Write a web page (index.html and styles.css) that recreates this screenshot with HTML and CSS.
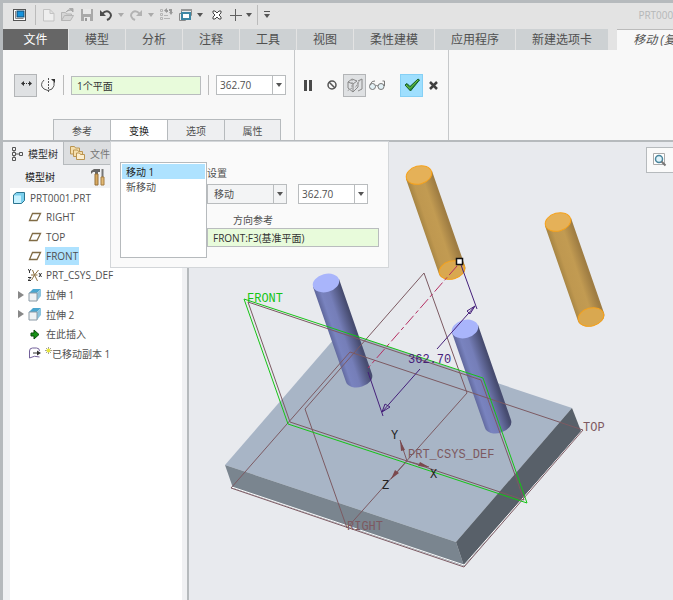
FILE: index.html
```html
<!DOCTYPE html>
<html lang="zh-CN">
<head>
    <meta charset="UTF-8">
    <meta name="viewport" content="width=device-width, initial-scale=1.0">
    <title>PRT0001</title>
    <link rel="stylesheet" href="styles.css">
</head>
<body>
    <header class="title-bar">
        <button class="tool" aria-label="窗口"><svg width="16" height="16" viewBox="0 0 16 16"><rect x="2.500" y="2.500" width="12" height="11" fill="#fff" stroke="#555"/><path d="M4.500 4v7.500h8" fill="none" stroke="#888"/><rect x="6" y="4" width="7" height="6" fill="#1593dd" stroke="#134a70"/></svg></button>
        <span class="divider"></span>
        <button class="tool" aria-label="新建"><svg width="16" height="16" viewBox="0 0 16 16"><path d="M2.500 2.500h6.500l4 4v7.500h-10.500zM9 2.500v4h4" fill="#eee" stroke="#c3c3c3"/></svg></button>
        <button class="tool" aria-label="打开"><svg width="16" height="16" viewBox="0 0 16 16"><path d="M1.500 13.500v-8h4l1 1.500h5v2M1.500 13.500l3-5h9l-3 5z" fill="#d5d5d5" stroke="#b5b5b5"/><path d="M6 5q2-3 5-2M9.500 1.500h3.500v3.500z" fill="#aaa" stroke="#aaa"/></svg></button>
        <button class="tool" aria-label="保存"><svg width="16" height="16" viewBox="0 0 16 16"><path d="M2 2h12v12h-12z" fill="#a9a9a9"/><path d="M4 2h8v5h-8zM5 10h6v4h-6z" fill="#e8e8e8"/><path d="M6 11h2v3h-2z" fill="#999"/></svg></button>
        <button class="tool" aria-label="撤消"><svg width="16" height="16" viewBox="0 0 16 16"><path d="M4 7q4-4 7-2 4 3 0 7l-2 1" fill="none" stroke="#4b4b4b" stroke-width="2"/><path d="M2 3v6h6z" fill="#4b4b4b"/></svg></button>
        <button class="caret pale" aria-label="撤消列表"></button>
        <button class="tool" aria-label="重做"><svg width="16" height="16" viewBox="0 0 16 16"><path d="M12 7q-4-4-7-2-4 3 0 7l2 1" fill="none" stroke="#b3b3b3" stroke-width="2"/><path d="M14 3v6h-6z" fill="#b3b3b3"/></svg></button>
        <button class="caret pale" aria-label="重做列表"></button>
        <button class="tool" aria-label="重新生成"><svg width="16" height="16" viewBox="0 0 16 16"><path d="M2.500 2.500h2v2h-2zM2.500 6.500h2v2h-2zM2.500 10.500h2v2h-2zM6 8.500h4M6 11.500h6" fill="none" stroke="#b5b5b5"/><path d="M8 4h2M13 5v-2h-2" fill="none" stroke="#999" stroke-width="2"/><path d="M9 1v5l-3-2.500zM11 5h4l-2 3z" fill="#999"/></svg></button>
        <button class="tool" aria-label="切换窗口"><svg width="16" height="16" viewBox="0 0 16 16"><path d="M4.500 2.500h10v6h-10zM2.500 6.500h6v7h-6z" fill="#eee" stroke="#8a8a8a"/><path d="M4 2h11v2h-11z" fill="#999"/><rect x="5" y="6" width="8" height="6" fill="#fff" stroke="#3e87a4" stroke-width="2"/></svg></button>
        <button class="caret" aria-label="窗口列表"></button>
        <button class="tool" aria-label="关闭窗口"><svg width="16" height="16" viewBox="0 0 16 16"><path d="M6 4h2l2 2 2-2h2v2l-2 2 2 2v2h-2l-2-2-2 2h-2v-2l2-2-2-2v-2z" fill="#fff" stroke="#444"/></svg></button>
        <button class="tool" aria-label="添加"><svg width="16" height="16" viewBox="0 0 16 16"><path d="M4 8.500h12M9.500 2v12" stroke="#606060"/></svg></button>
        <button class="caret" aria-label="添加列表"></button>
        <span class="divider short"></span>
        <button class="caret barred" aria-label="自定义快速访问工具栏"></button>
        <span class="doc-name">PRT0001</span>
    </header>

    <nav class="ribbon-tabs">
        <button class="file-tab">文件</button>
        <button>模型</button>
        <button>分析</button>
        <button>注释</button>
        <button>工具</button>
        <button>视图</button>
        <button>柔性建模</button>
        <button>应用程序</button>
        <button>新建选项卡</button>
        <button class="current">移动 (复制)</button>
    </nav>

    <section class="ribbon">
        <div class="group">
            <div class="controls">
                <button class="square on" aria-label="平移"><svg width="16" height="16" viewBox="0 0 16 16"><path d="M4 6.500h3M8 6.500h1M10 6.500h3" stroke="#333"/><path d="M3 6.500l3-2.500v5zM14 6.500l-3-2.500v5z" fill="#333"/></svg></button>
                <button class="tool" aria-label="旋转"><svg width="16" height="16" viewBox="0 0 16 16"><path d="M4 3q-5 5 0 9 4 3 8 0 3-3 2-7" fill="none" stroke="#555"/><path d="M8.500 1v15" stroke="#555" stroke-dasharray="2 1"/><path d="M11 2h4v4z" fill="#333"/></svg></button>
                <span class="divider tall"></span>
                <input class="collector" type="text" value="1个平面" aria-label="方向参考">
                <span class="divider tall"></span>
                <span class="combo"><select aria-label="偏移值"><option>362.70</option></select></span>
            </div>
            <div class="sub-tabs">
                <button>参考</button>
                <button class="current">变换</button>
                <button>选项</button>
                <button>属性</button>
                <div class="panel">
                    <select class="moves" size="5" aria-label="移动列表">
                        <option selected>移动 1</option>
                        <option>新移动</option>
                    </select>
                    <div class="settings">
                        <label for="kind">设置</label>
                        <div class="pair">
                            <span class="combo wide"><select id="kind"><option>移动</option></select></span>
                            <span class="combo"><select aria-label="距离"><option>362.70</option></select></span>
                        </div>
                        <label class="indent" for="direction">方向参考</label>
                        <input class="collector" id="direction" type="text" value="FRONT:F3(基准平面)">
                    </div>
                </div>
            </div>
        </div>
        <div class="group actions">
            <div class="controls">
                <button class="tool" aria-label="暂停"><svg width="16" height="16" viewBox="0 0 16 16"><path d="M4 3h3v11h-3zM9 3h3v11h-3z" fill="#4a4a4a"/></svg></button>
                <button class="tool push" aria-label="无预览"><svg width="16" height="16" viewBox="0 0 16 16"><circle cx="8" cy="8" r="4" fill="none" stroke="#555" stroke-width="1.500"/><path d="M5 5l6 6" stroke="#555" stroke-width="1.500"/></svg></button>
                <button class="square on" aria-label="连接预览"><svg width="18" height="16" viewBox="0 0 18 16"><path d="M2 5l4-3 5 2-4 3zM2 5v6l5 4v-8M7 15l5-5v-5M12 4l4-2v10l-4 2" fill="none" stroke="#888"/><path d="M6 2v9l-5 3M14 3l-5 8" fill="none" stroke="#999" stroke-dasharray="2 1"/></svg></button>
                <button class="tool" aria-label="校验"><svg width="16" height="16" viewBox="0 0 16 16"><circle cx="3.500" cy="9.500" r="3" fill="#e3f1f6" stroke="#777"/><circle cx="12" cy="9.500" r="3" fill="#e3f1f6" stroke="#777"/><path d="M6.500 9q1-1 2.500 0M1 8q2-5 5-4M15.500 9v-5h-2" fill="none" stroke="#777"/></svg></button>
                <button class="square ok" aria-label="确定"><svg width="18" height="18" viewBox="0 0 18 18"><path d="M2 9l2-1.500 3 3 8-7.500 1.500 1-9 11z" fill="#248a37" stroke="#145e29"/><path d="M3 9l4 3.500 8-8.500" fill="none" stroke="#81c63c"/></svg></button>
                <button class="tool" aria-label="取消"><svg width="16" height="16" viewBox="0 0 16 16"><path d="M4 5l7 7M11 5l-7 7" stroke="#3f3f3f" stroke-width="2.500"/></svg></button>
            </div>
        </div>
    </section>

    <main class="workspace">
        <aside class="sidebar">
            <div class="side-tabs">
                <button class="current"><svg width="14" height="16" viewBox="0 0 14 16"><path d="M2.500 1.500h3v3h-3zM2.500 6.500h3v3h-3zM2.500 11.500h3v3h-3zM9.500 6.500h3v3h-3zM4 5v1M4 10v1M6 8h3" fill="none" stroke="#555"/></svg>模型树</button>
                <button><svg width="18" height="16" viewBox="0 0 18 16"><path d="M1.500 1.500h4l1 1.500h4v6h-9z" fill="#f5dfad" stroke="#bb9551"/><path d="M4.500 5h4l1 1.500h4v5h-9z" fill="#f5dfad" stroke="#bb9551"/><path d="M7.500 8h3l1 1.500h4v5h-8z" fill="#fbeed0" stroke="#bb9551"/></svg>文件</button>
            </div>
            <div class="side-head">
                <span>模型树</span>
                <button class="tool" aria-label="设置"><svg width="16" height="18" viewBox="0 0 16 18"><path d="M1 3l3-2h6v3h-2v2h-3v-2h-2l-2 2z" fill="#666"/><path d="M5 6h3v11h-3z" fill="#d9aa60" stroke="#95713a"/><path d="M12.500 1v8" stroke="#777" stroke-width="2"/><path d="M11 9h3v8h-3z" fill="#e1b974" stroke="#a47c42"/></svg></button>
            </div>
            <div class="tree-pane">
                <ul class="tree">
                    <li class="root"><svg width="14" height="14" viewBox="0 0 14 14"><path d="M1.500 4l3-2.500h8v8l-3 3h-8z" fill="#7bd0ee" stroke="#2c7590"/><path d="M2 4.500h7v7.500h-7z" fill="#c6f1ff"/></svg>PRT0001.PRT</li>
                    <li><svg width="14" height="14" viewBox="0 0 14 14"><path d="M4.500 3.500h8l-3.500 7h-7.500z" fill="none" stroke="#806b45" stroke-width="1.300"/></svg>RIGHT</li>
                    <li><svg width="14" height="14" viewBox="0 0 14 14"><path d="M4.500 3.500h8l-3.500 7h-7.500z" fill="none" stroke="#806b45" stroke-width="1.300"/></svg>TOP</li>
                    <li><svg width="14" height="14" viewBox="0 0 14 14"><path d="M4.500 3.500h8l-3.500 7h-7.500z" fill="none" stroke="#806b45" stroke-width="1.300"/></svg><span class="picked">FRONT</span></li>
                    <li><svg width="14" height="14" viewBox="0 0 14 14"><path d="M6.500 7l-2-5M6.500 7l4-5M6.500 7h3M6.500 7l-3 5M6.500 7l3 6M3 7h3" stroke="#8c7040"/><path d="M0 1l1.500 2 1.500-2M1.500 3v2M0 9.500h3l-3 3h3M11 5l2.500 4M13.500 5l-2.500 4" fill="none" stroke="#333"/></svg>PRT_CSYS_DEF</li>
                    <li class="folded"><svg width="14" height="14" viewBox="0 0 14 14"><path d="M1 5l4-4h8l-4 4z" fill="#4aa6cf"/><path d="M9 5l4-4v7l-4 5z" fill="#8cc4dd"/><path d="M1 5h8v8h-8z" fill="#eef2f4" stroke="#8b9aa5"/></svg>拉伸 1</li>
                    <li class="folded"><svg width="14" height="14" viewBox="0 0 14 14"><path d="M1 5l4-4h8l-4 4z" fill="#4aa6cf"/><path d="M9 5l4-4v7l-4 5z" fill="#8cc4dd"/><path d="M1 5h8v8h-8z" fill="#eef2f4" stroke="#8b9aa5"/></svg>拉伸 2</li>
                    <li><svg width="14" height="14" viewBox="0 0 14 14"><path d="M3 6h3v-3l5 4.500-5 4.500v-3h-3z" fill="#179317" stroke="#0a4c0a"/></svg>在此插入</li>
                    <li><svg width="14" height="14" viewBox="0 0 14 14"><path d="M1.500 12v-7q0-3 3-3h4q3 0 3 3M1.500 12q5-3 10-1" fill="none" stroke="#73609a"/><path d="M5 7h5" stroke="#333"/><path d="M9 4.500l4 2.500-4 2.500z" fill="#333"/></svg><svg class="spark" width="7" height="12" viewBox="0 0 7 12"><path d="M1 1l5 5M6 1l-5 5M3.500 0v7M0 3.500h7" stroke="#777" stroke-width=".7"/><circle cx="3.500" cy="3.500" r="2" fill="#e8e63c"/></svg>已移动副本 1</li>
                </ul>
            </div>
        </aside>
        <section class="viewport">
            <svg class="scene" viewBox="189 142 484 458" preserveAspectRatio="xMinYMin slice">
                <defs>
                    <linearGradient id="blue" gradientUnits="userSpaceOnUse" x1="-12" y1="4" x2="12" y2="-4">
                        <stop offset="0" stop-color="#626a9f"/>
                        <stop offset=".2" stop-color="#7983bf"/>
                        <stop offset=".5" stop-color="#757eb8"/>
                        <stop offset="1" stop-color="#474c70"/>
                    </linearGradient>
                    <linearGradient id="orange" gradientUnits="userSpaceOnUse" x1="-12" y1="4" x2="12" y2="-4">
                        <stop offset="0" stop-color="#a98745"/>
                        <stop offset=".2" stop-color="#bf9850"/>
                        <stop offset=".6" stop-color="#c29b52"/>
                        <stop offset="1" stop-color="#9f7d43"/>
                    </linearGradient>
                    <g id="post">
                        <path d="M-13 4L20 99A13.500 9 -15 0 0 46 91L13 -4z" fill="url(#blue)"/>
                        <ellipse rx="13.500" ry="9" transform="rotate(-15)" fill="#a9b5fb"/>
                    </g>
                    <g id="copy">
                        <path d="M-13 4L20 99A13.500 9 -15 0 0 46 91L13 -4z" fill="url(#orange)"/>
                        <ellipse rx="13" ry="9" transform="rotate(-15)" fill="#e5b158" stroke="#f6a21c"/>
                        <ellipse rx="13" ry="9" transform="translate(33 95) rotate(-15)" fill="#d9a850" stroke="#f6a21c"/>
                    </g>
                </defs>

                <!-- base plate -->
                <path d="M225 465L341 331L572 408L456 542z" fill="#a8b5c6"/>
                <path d="M225 465L456 542L464 566L233 488z" fill="#7a858f"/>
                <path d="M456 542L572 408L581 431L464 566z" fill="#586069"/>

                <use href="#post" x="326" y="283"/>
                <use href="#post" x="465" y="329"/>
                <use href="#copy" x="419" y="175"/>
                <use href="#copy" x="558" y="222"/>

                <!-- datum planes -->
                <path class="halo" d="M232 487L464 565L582 431"/>
                <path class="datum" d="M231 488L464 567L583 430L350 352z"/>
                <path class="datum" d="M305 409L424 273L467 393L347 528z"/>
                <path class="datum" d="M248 302L290 422L524 500L481 380z"/>
                <path class="datum-on" d="M244 299L288 424L527 503L483 378z"/>

                <!-- coordinate system -->
                <path class="datum" d="M407 461L400 440M407 461L429 467M407 461L391 479"/>
                <path class="head" d="M400 440L401 451L405 450zM429 467L418 466L420 462zM391 479L395 470L399 473z"/>

                <!-- offset dimension -->
                <path class="drag" d="M457 266L368 368"/>
                <path class="dim" d="M461 265L477 309M475 306L437 349M420 369L382 412M368 372L383 416"/>
                <path class="dim" d="M475 306L470 314L467 311zM382 412L385 404L390 407z"/>
                <rect x="456.500" y="258.500" width="6" height="6" fill="#fff" stroke="#111" stroke-width="1.500"/>

                <text class="green" x="247" y="302">FRONT</text>
                <text x="583" y="431">TOP</text>
                <text x="347" y="530">RIGHT</text>
                <text x="408" y="458">PRT_CSYS_DEF</text>
                <text class="purple" x="408" y="363">362.70</text>
                <text class="axis" x="391" y="439">Y</text>
                <text class="axis" x="430" y="478">X</text>
                <text class="axis" x="382" y="489">Z</text>
            </svg>
            <button class="zoom-button" aria-label="缩放"><svg width="16" height="16" viewBox="0 0 16 16"><path d="M1.500 1.500h11v11h-11z" fill="#fff" stroke="#aaa"/><circle cx="7" cy="7" r="3.500" fill="#e0f3fa" stroke="#49859c" stroke-width="1.500"/><path d="M9.500 9.500l4 4" stroke="#777" stroke-width="2"/></svg></button>
        </section>
    </main>
</body>
</html>
```

FILE: styles.css
```css
* {
    box-sizing: border-box;
}
body {
    margin: 0;
    min-height: 100vh;
    display: flex;
    flex-direction: column;
    overflow: hidden;
    border-top: 3px solid #b6babd;
    border-left: 3px solid #b6babd;
    background: #e8eaee;
    color: #505050;
    font-family: "Open Sans", "Noto Sans CJK SC", sans-serif;
    font-size: 10px;
}
button, input, select {
    margin: 0;
    padding: 0;
    border: 0;
    border-radius: 0;
    background: none;
    color: inherit;
    font: inherit;
}
svg {
    display: block;
    flex: none;
}

/* quick access toolbar */
.title-bar {
    display: flex;
    align-items: center;
    gap: 3px;
    height: 26px;
    padding: 0 0 2px 8px;
    background: #e3e3e3;
    white-space: nowrap;
}
.tool {
    display: flex;
    flex: none;
}
.divider {
    flex: none;
    width: 1px;
    height: 20px;
    margin: 0 2px 0 5px;
    background: #bbb;
}
.divider.short {
    margin: 0 2px 0 1px;
}
.divider.tall {
    margin: 0 4px;
}
.caret {
    flex: none;
    width: 8px;
    height: 8px;
    background: #555;
    clip-path: polygon(1px 2px, 7px 2px, 4px 6px);
}
.caret.pale {
    background: #aaa;
}
.caret.barred {
    clip-path: polygon(1px 0, 7px 0, 7px 1px, 1px 1px, 1px 3px, 7px 3px, 4px 7px, 1px 3px);
}
.doc-name {
    margin-left: auto;
    margin-right: -6px;
    color: #b5b7b8;
}

/* ribbon */
.ribbon-tabs {
    display: flex;
    gap: 1px;
    height: 21px;
    background: #e3e3e3;
}
.ribbon-tabs button {
    flex: none;
    padding: 0 16px;
    background: #cdd1d3;
    font-size: 12px;
    line-height: 20px;
}
.ribbon-tabs .file-tab {
    width: 65px;
    padding: 0;
    background: #666;
    color: #fff;
}
.ribbon-tabs .current {
    margin-left: 8px;
    border-top: 1px solid #bbb;
    background: #f8f8f8;
    font-style: italic;
}
.ribbon {
    display: flex;
    height: 92px;
    border-bottom: 2px solid #b6babd;
    background: #f8f8f8;
}
.group {
    display: flex;
    flex-direction: column;
    justify-content: space-between;
    padding: 23px 8px 0 11px;
    border-right: 1px solid #c6c8ca;
}
.controls {
    display: flex;
    align-items: center;
    gap: 3px;
    height: 24px;
}
.square {
    display: flex;
    flex: none;
    align-items: center;
    justify-content: center;
    width: 23px;
    height: 23px;
    border: 1px solid #b3b5b7;
    background: #dfe1e3;
}
.square.ok {
    margin-left: 12px;
    border-color: #86d0f5;
    background: #9fdffe;
}
.actions {
    padding-left: 5px;
    padding-right: 6px;
}
.actions .push {
    margin-left: 5px;
}
.collector {
    width: 130px;
    height: 19px;
    padding: 0 5px;
    border: 1px solid #b9bcbe;
    background: #e8fbdb;
    color: #333;
}
.combo {
    position: relative;
    width: 70px;
    height: 20px;
    border: 1px solid #b9bcbe;
    background: #fff;
}
.combo select {
    display: block;
    width: 100%;
    height: 18px;
    padding-left: 3px;
    appearance: none;
}
/* drop-down arrow over the right end of the select */
.combo::before {
    content: "";
    position: absolute;
    top: 0;
    right: 0;
    width: 12px;
    height: 18px;
    border-left: 1px solid #b9bcbe;
    pointer-events: none;
}
.combo::after {
    content: "";
    position: absolute;
    top: 7px;
    right: 3px;
    border: 3px solid transparent;
    border-top: 4px solid #555;
    border-bottom: 0;
    pointer-events: none;
}
.combo.wide {
    width: 80px;
    background: #f3f4f5;
}
.combo.wide select {
    padding-left: 6px;
}
.sub-tabs {
    position: relative;
    display: flex;
    align-self: flex-start;
    margin-left: 39px;
}
.sub-tabs button {
    width: 57px;
    height: 21px;
    border: 1px solid #b6babd;
    border-right: 0;
    border-bottom: 0;
    background: #eeeff1;
}
.sub-tabs button:nth-child(4) {
    border-right: 1px solid #b6babd;
}
.sub-tabs .current {
    background: #fff;
    color: #222;
}

/* slide-down panel of the current sub tab */
.panel {
    position: absolute;
    top: 22px;
    left: 57px;
    z-index: 2;
    display: flex;
    width: 279px;
    height: 127px;
    padding: 20px 9px 10px 9px;
    border: 1px solid #d3d6d9;
    background: #fafafa;
}
.moves {
    flex: none;
    width: 87px;
    height: 96px;
    padding: 1px;
    border: 1px solid #b6babd;
    background: #fff;
    overflow: hidden;
    outline: 0;
}
.moves option {
    min-height: 15px;
    padding: 0 4px;
    line-height: 15px;
}
.moves option:checked {
    background: #aee2ff linear-gradient(#aee2ff, #aee2ff);
    color: #222;
}
.settings {
    flex: 1;
}
.settings label {
    display: block;
    padding-top: 4px;
    line-height: 14px;
}
.pair {
    display: flex;
    gap: 11px;
    padding-top: 4px;
}
.settings .indent {
    padding: 9px 0 1px 26px;
}
.settings .collector {
    display: block;
    width: 100%;
}

/* model tree */
.workspace {
    flex: 1;
    display: flex;
}
.sidebar {
    flex: none;
    display: flex;
    flex-direction: column;
    width: 186px;
    padding-right: 5px;
    border-right: 2px solid #b6babd;
    background: #f0f1f3;
}
.side-tabs {
    display: flex;
    white-space: nowrap;
}
.side-tabs button {
    flex: 1;
    display: flex;
    align-items: center;
    gap: 3px;
    height: 23px;
    padding: 0 5px;
    border: 1px solid #b6babd;
    border-top: 0;
    background: #dcdee0;
    color: #777;
}
.side-tabs .current {
    flex: none;
    gap: 4px;
    padding-left: 7px;
    border: 0;
    background: none;
    color: #333;
}
.side-head {
    display: flex;
    align-items: center;
    gap: 35px;
    height: 23px;
    padding-left: 22px;
    color: #222;
}
.tree-pane {
    flex: 1;
    margin-left: 7px;
    background: #fff;
}
.tree {
    display: grid;
    grid-template-rows: repeat(9, 1fr);
    height: 175px;
    margin: 0;
    padding: 0;
    list-style: none;
}
.tree li {
    display: flex;
    align-items: center;
    gap: 4px;
    padding-left: 18px;
}
.tree .root {
    padding-left: 2px;
}
.tree .folded {
    padding-left: 8px;
}
.tree .folded::before {
    content: "";
    border: 4px solid transparent;
    border-left: 6px solid #888;
    border-right: 0;
}
.picked {
    margin-left: -1px;
    padding: 0 1px;
    background: #aee2ff;
    line-height: 18px;
}
.spark {
    margin: 0 -4px 0 -1px;
}

/* graphics area */
.viewport {
    position: relative;
    flex: 1;
    min-width: 0;
    overflow: hidden;
}
.scene {
    width: 100%;
    height: 100%;
}
.scene text {
    fill: #7d5960;
    font-family: "Liberation Mono", monospace;
    font-size: 12px;
}
.scene .green {
    fill: #16c416;
}
.scene .purple {
    fill: #45207a;
}
.scene .axis {
    fill: #222;
}
.datum {
    fill: none;
    stroke: #7c5a62;
}
.halo {
    fill: none;
    stroke: #fff;
}
.datum-on {
    fill: none;
    stroke: #16c416;
}
.head {
    fill: #7b494e;
}
.dim {
    fill: none;
    stroke: #45207a;
}
.drag {
    fill: none;
    stroke: #b52f62;
    stroke-dasharray: 12 3 4 3;
}
.zoom-button {
    position: absolute;
    top: 5px;
    left: 457px;
    display: flex;
    align-items: center;
    width: 32px;
    height: 26px;
    padding-left: 5px;
    border: 1px solid #b6babd;
    background: #fafafa;
}
```
